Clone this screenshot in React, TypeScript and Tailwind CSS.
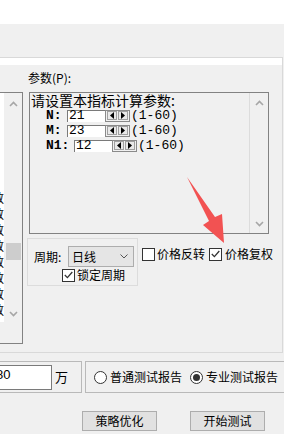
import React from "react";

const cjk = { fontFamily: '"Noto Sans CJK SC", "Noto Sans", sans-serif' };
const mono = { fontFamily: '"Liberation Mono", "DejaVu Sans Mono", monospace' };

const Tri = ({ dir }: { dir: "l" | "r" }) => (
  <svg width="4" height="7" viewBox="0 0 4 7">
    <path d={dir === "l" ? "M4 0 L0 3.5 L4 7Z" : "M0 0 L4 3.5 L0 7Z"} fill="#000" />
  </svg>
);

const Spinner = () => (
  <div className="flex h-[12px] w-[25px] items-center justify-center gap-[1px] border border-[#8a8a8a] bg-[#f0f0f0]">
    <div className="flex h-[9px] w-[10px] items-center justify-center border border-[#a0a0a0] bg-[#e9e9e9]">
      <Tri dir="l" />
    </div>
    <div className="flex h-[9px] w-[10px] items-center justify-center border border-[#a0a0a0] bg-[#e9e9e9]">
      <Tri dir="r" />
    </div>
  </div>
);

const Chevron = ({ up }: { up?: boolean }) => (
  <svg width="9" height="6" viewBox="0 0 9 6">
    <path
      d={up ? "M1 5 L4.5 1.5 L8 5" : "M1 1 L4.5 4.5 L8 1"}
      fill="none"
      stroke="#a6a6a6"
      strokeWidth="1.6"
    />
  </svg>
);

const Check = ({ checked }: { checked?: boolean }) => (
  <div className="flex h-[13px] w-[13px] shrink-0 items-center justify-center border border-[#333] bg-white">
    {checked && (
      <svg width="9" height="8" viewBox="0 0 9 8">
        <path d="M0.8 4 L3.4 6.6 L8.3 1" fill="none" stroke="#333" strokeWidth="1.3" />
      </svg>
    )}
  </div>
);

const Radio = ({ checked }: { checked?: boolean }) => (
  <div className="flex h-[13px] w-[13px] shrink-0 items-center justify-center rounded-full border border-[#333] bg-white">
    {checked && <div className="h-[7px] w-[7px] rounded-full bg-[#333]" />}
  </div>
);

const ParamRow = ({ label, value, labelW }: { label: string; value: string; labelW: string }) => (
  <div className="flex h-[15px] items-center">
    <span className={`${labelW} pl-[15px] text-[13px] font-bold leading-[15px]`} style={mono}>
      {label}
    </span>
    <div className="flex h-[12px] w-[38px] items-center border-t border-l border-[#7a7a7a] bg-white pl-[1px] text-[13px] leading-[12px]" style={mono}>
      {value}
    </div>
    <Spinner />
    <span className="ml-[1px] text-[13px] leading-[15px]" style={mono}>
      (1-60)
    </span>
  </div>
);

const listLines = ["沪深300指数", "上证综合指数", "深证成份指数", "创业板指数", "中小板指数", "上证50指数", "中证500指数", "科创50指数"];

export default function App() {
  return (
    <div className="relative flex h-[434px] w-[284px] flex-col overflow-hidden bg-[#f0f0f0] text-[12px] text-black" style={cjk}>
      <div className="h-[24px] shrink-0 bg-white" />
      <div className="h-[33px] shrink-0" />

      {/* main panel */}
      <div className="flex h-[296px] w-[283px] shrink-0 flex-col border-t border-r border-b border-[#d9d9d9]">
        <div className="h-[7px] shrink-0 bg-white" />
        <div className="flex flex-1">
          {/* cut-off list on the left */}
          <div className="mt-[27px] flex h-[252px] w-[23px] shrink-0 flex-col border-t border-r border-b border-[#828282]">
            <div className="flex h-[229px]">
              <div className="flex w-[4px] flex-col overflow-hidden bg-white pt-[97px]">
                {listLines.map((l) => (
                  <div key={l} className="flex h-[16px] justify-end whitespace-nowrap text-[12px] leading-[16px]">
                    {l}
                  </div>
                ))}
              </div>
              <div className="flex w-[18px] flex-col items-center">
                <div className="mt-[8px]">
                  <Chevron up />
                </div>
                <div className="mt-[136px] h-[17px] w-[15px] bg-[#cdcdcd]" />
                <div className="mt-auto mb-[5px]">
                  <Chevron />
                </div>
              </div>
            </div>
          </div>

          {/* right column */}
          <div className="ml-[5px] flex flex-col">
            <div className="mt-[6px] h-[14px] leading-[14px]">参数(P):</div>
            <div className="mt-[7px] ml-[1px] flex h-[142px] w-[240px] border border-[#828282]">
              <div className="w-[219px] pl-[1px]">
                <div className="text-[14px] leading-[15px]">请设置本指标计算参数:</div>
                <ParamRow label="N:" value="21" labelW="w-[36px]" />
                <ParamRow label="M:" value="23" labelW="w-[36px]" />
                <ParamRow label="N1:" value="12" labelW="w-[43px]" />
              </div>
              <div className="flex w-[19px] flex-col items-center border-l border-[#dcdcdc]">
                <div className="mt-[7px]">
                  <Chevron up />
                </div>
                <div className="mt-auto mb-[6px]">
                  <Chevron />
                </div>
              </div>
            </div>

            <div className="mt-[4px] -ml-[1px] flex items-start">
              <div className="flex h-[48px] w-[111px] flex-col border border-[#dcdcdc]">
                <div className="mt-[7px] flex items-center">
                  <span className="ml-[6px] w-[34px]">周期:</span>
                  <div className="flex h-[21px] w-[66px] items-center justify-between border border-[#adadad] bg-[#e5e5e5] pr-[5px] pl-[3px]">
                    <span>日线</span>
                    <svg width="8" height="5" viewBox="0 0 8 5">
                      <path d="M0.5 0.5 L4 4 L7.5 0.5" fill="none" stroke="#555" strokeWidth="1" />
                    </svg>
                  </div>
                </div>
                <div className="mt-[1px] ml-[34px] flex items-center gap-[2px] leading-[14px]">
                  <Check checked />
                  <span>锁定周期</span>
                </div>
              </div>
              <div className="mt-[9px] ml-[4px] flex items-center leading-[14px]">
                <Check />
                <span className="ml-[2px]">价格反转</span>
                <div className="ml-[4px]">
                  <Check checked />
                </div>
                <span className="ml-[3px]">价格复权</span>
              </div>
            </div>
          </div>
        </div>
      </div>

      {/* bottom groups */}
      <div className="mt-[8px] flex h-[32px] shrink-0">
        <div className="flex h-[32px] w-[82px] shrink-0 items-center border-t border-r border-b border-[#b9b9b9]">
          <div className="flex h-[25px] w-[52px] items-start overflow-hidden border-t border-r border-b border-[#7a7a7a] bg-white">
            <span className="-ml-[4px] mt-[1px] text-[13px] leading-[16px]" style={{ fontFamily: '"Liberation Sans", Arial, sans-serif' }}>
              80
            </span>
          </div>
          <span className="ml-[3px] text-[13px]">万</span>
        </div>
        <div className="ml-[3px] flex h-[32px] w-[220px] shrink-0 items-center border border-[#b9b9b9] pl-[8px]">
          <Radio />
          <span className="ml-[3px]">普通测试报告</span>
          <div className="ml-[8px]">
            <Radio checked />
          </div>
          <span className="ml-[3px]">专业测试报告</span>
        </div>
      </div>

      <div className="mt-[18px] flex shrink-0">
        <button className="ml-[82px] flex h-[20px] w-[75px] items-center justify-center border border-[#adadad] bg-[#e1e1e1]">
          策略优化
        </button>
        <button className="ml-[33px] flex h-[20px] w-[75px] items-center justify-center border border-[#adadad] bg-[#e1e1e1]">
          开始测试
        </button>
      </div>

      {/* annotation arrow */}
      <svg className="pointer-events-none absolute top-0 left-0" width="284" height="434" viewBox="0 0 284 434">
        <polygon
          points="187,177 215,217 222,214 224,243 203,225 209,221"
          fill="#f25252"
        />
      </svg>
    </div>
  );
}
